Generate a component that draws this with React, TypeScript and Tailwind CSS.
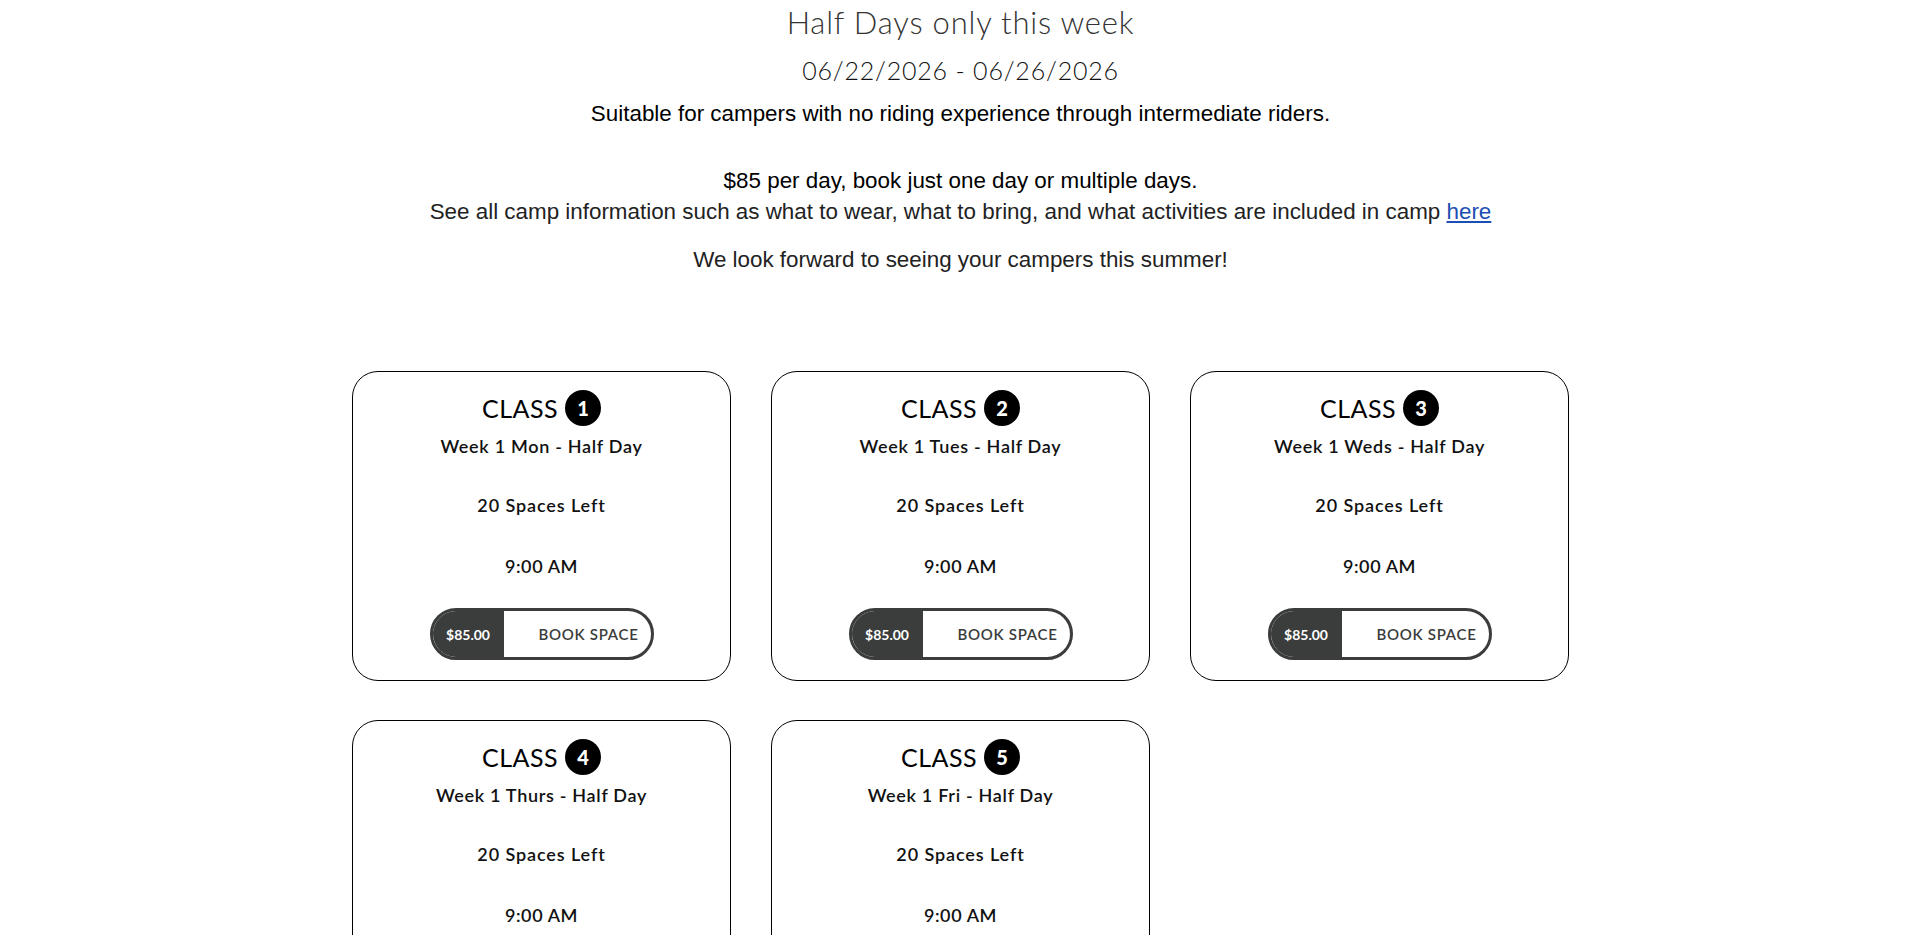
import React from "react";

const classes = [
  { n: 1, name: "Week 1 Mon - Half Day" },
  { n: 2, name: "Week 1 Tues - Half Day" },
  { n: 3, name: "Week 1 Weds - Half Day" },
  { n: 4, name: "Week 1 Thurs - Half Day" },
  { n: 5, name: "Week 1 Fri - Half Day" },
];

const geo = { fontFamily: "Lato, 'Noto Sans', sans-serif" };
const arial = { fontFamily: "'Liberation Sans', Arial, sans-serif" };

function Card({ n, name }: { n: number; name: string }) {
  return (
    <div className="flex h-[310px] flex-col items-center rounded-[26px] border border-black bg-white pt-[18px]" style={geo}>
      <div className="flex h-[36px] items-center gap-[7px]">
        <span className="text-[25px] leading-none tracking-[0.5px] text-black">CLASS</span>
        <span className="flex h-[36px] w-[36px] items-center justify-center rounded-full bg-black text-[20px] font-black leading-none text-white">
          {n}
        </span>
      </div>
      <div className="mt-[8px] text-[18px] font-semibold leading-[24px] tracking-[0.7px] text-[#111]">{name}</div>
      <div className="mt-[35px] text-[18px] font-semibold leading-[24px] tracking-[0.9px] text-[#111]">20 Spaces Left</div>
      <div className="mt-[37px] text-[18px] font-semibold leading-[24px] tracking-[0.6px] text-[#111]">9:00 AM</div>
      <button className="mt-[30px] flex h-[52px] w-[224px] items-stretch overflow-hidden rounded-full border-[3px] border-[#3a3d3c] bg-white p-0">
        <span className="flex w-[71px] items-center justify-center bg-[#3a3d3c] text-[14px] font-bold tracking-[0px] text-white">
          $85.00
        </span>
        <span className="flex flex-1 items-center justify-end pr-[12px] text-[15px] font-semibold tracking-[0.7px] text-[#3a3d3c]">
          BOOK SPACE
        </span>
      </button>
    </div>
  );
}

export default function App() {
  return (
    <div className="min-h-[935px] w-full bg-white pb-10">
      <div className="pt-[2px] text-center" style={geo}>
        <h1 className="text-[31px] font-light leading-[40px] tracking-[0.8px] text-[#333]">Half Days only this week</h1>
        <h2 className="mt-[10px] text-[25px] font-light leading-[36px] tracking-[0.8px] text-[#111]">06/22/2026 - 06/26/2026</h2>
      </div>
      <div className="text-center text-[22.4px] text-black" style={arial}>
        <p className="mt-[13px] leading-[26px]">Suitable for campers with no riding experience through intermediate riders.</p>
        <p className="mt-[41px] leading-[26px]">$85 per day, book just one day or multiple days.</p>
        <p className="mt-[5px] leading-[26px] text-[#222]">
          See all camp information such as what to wear, what to bring, and what activities are included in camp{" "}
          <a href="#" className="text-[#1c4fb3] underline">here</a>
        </p>
        <p className="mt-[22px] leading-[26px] text-[#222]">We look forward to seeing your campers this summer!</p>
      </div>
      <div className="mx-auto mt-[98px] grid w-[1217px] grid-cols-3 gap-x-[40px] gap-y-[39px]">
        {classes.map((c) => (
          <Card key={c.n} n={c.n} name={c.name} />
        ))}
      </div>
    </div>
  );
}
